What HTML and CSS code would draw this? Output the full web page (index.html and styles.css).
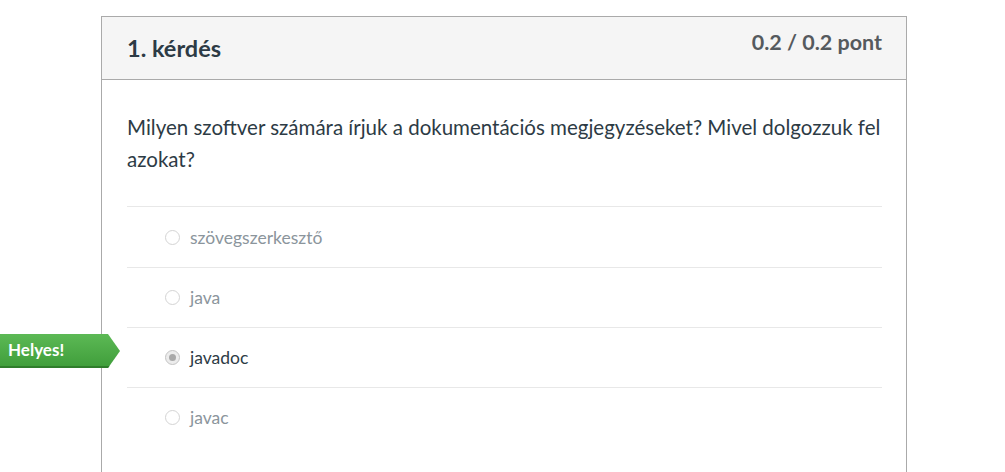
FILE: index.html
```html
<!DOCTYPE html>
<html lang="hu">
<head>
<meta charset="utf-8">
<link rel="stylesheet" href="styles.css">
</head>
<body>
<div class="page">
  <div class="question">
    <div class="q-header">
      <h2 class="q-title">1. kérdés</h2>
      <div class="q-points">0.2 / 0.2 pont</div>
    </div>
    <div class="q-body">
      <p class="q-text">Milyen szoftver számára írjuk a dokumentációs megjegyzéseket? Mivel dolgozzuk fel azokat?</p>
      <div class="answers">
        <div class="answer"><span class="radio"></span><span class="a-text">szövegszerkesztő</span></div>
        <div class="answer"><span class="radio"></span><span class="a-text">java</span></div>
        <div class="answer selected">
          <span class="flag">Helyes!</span>
          <span class="radio checked"></span><span class="a-text">javadoc</span>
        </div>
        <div class="answer"><span class="radio"></span><span class="a-text">javac</span></div>
      </div>
    </div>
  </div>
</div>
</body>
</html>
```

FILE: styles.css
```css
* { box-sizing: border-box; }
html, body { margin: 0; padding: 0; background: #fff; }
body {
  font-family: Lato, "Open Sans", "Liberation Sans", sans-serif;
  color: #2d3b45;
  height: 472px;
  overflow: hidden;
}
.page {
  padding: 16px 0 0 101px;
  width: 907px;
}
.question {
  border: 1px solid #aaaaaa;
  border-bottom: none;
  height: 456px;
}
.q-header {
  background: #f5f5f5;
  border-bottom: 1px solid #aaaaaa;
  height: 63px;
  display: flex;
  justify-content: space-between;
  align-items: flex-start;
  padding: 0 24px 0 25px;
}
.q-title {
  margin: 0;
  font-size: 23.5px;
  font-weight: 700;
  line-height: 28px;
  padding-top: 17px;
  color: #2d3b45;
}
.q-points {
  font-size: 21.5px;
  font-weight: 700;
  line-height: 26px;
  padding-top: 12px;
  color: #555a5e;
}
.q-body {
  padding: 31px 24px 0 25px;
}
.q-text {
  margin: 0 0 31px;
  font-size: 20.5px;
  line-height: 32px;
  color: #2d3b45;
}
.answer {
  position: relative;
  border-top: 1px solid #e8e8e8;
  height: 60px;
  display: flex;
  align-items: center;
  padding-left: 38px;
}
.answer:first-child { height: 61px; }
.radio {
  width: 15px;
  height: 15px;
  border-radius: 50%;
  border: 1.5px solid #d4d4d4;
  background: #fff;
  margin-right: 10px;
  flex: none;
  position: relative;
}
.radio.checked {
  border-color: #c4c4c4;
  background: #ececec;
}
.radio.checked::after {
  content: "";
  position: absolute;
  left: 2.5px;
  top: 2.5px;
  width: 7px;
  height: 7px;
  border-radius: 50%;
  background: #a9a9a9;
}
.a-text {
  font-size: 17.5px;
  color: #8b959c;
}
.selected .a-text { color: #2d3b45; }
.flag {
  position: absolute;
  left: -127px;
  top: 6px;
  width: 120px;
  height: 34px;
  padding-left: 8px;
  line-height: 32px;
  font-size: 17px;
  font-weight: 700;
  color: #fff;
  background: linear-gradient(#5cb955, #3f9d3a);
  clip-path: polygon(0 0, 108px 0, 120px 17px, 108px 34px, 0 34px);
  box-shadow: inset 0 -2px 0 #2f7d2b;
}
```
